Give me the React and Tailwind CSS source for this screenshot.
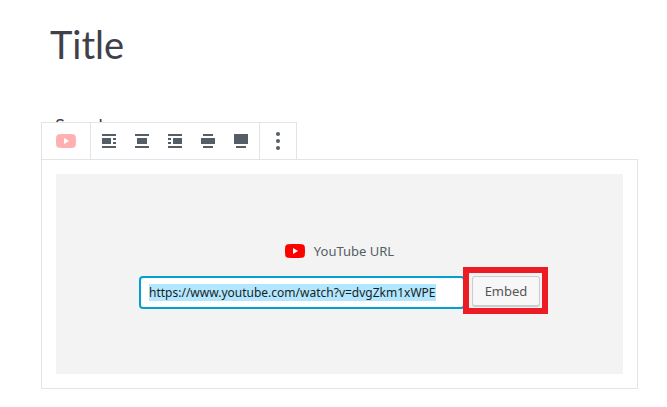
import { useEffect, useRef } from "react";

function YouTubeIcon({ className }) {
  return (
    <svg viewBox="0 0 20 14" className={`h-[14px] w-5 ${className}`} aria-hidden="true">
      <path
        fill="#ff0000"
        d="M3 .3C7 -.1 13 -.1 17 .3c1.600.2 2.400 1 2.700 2.300.4 2.800.4 6 0 8.800-.3 1.300-1.100 2.100-2.700 2.300-4 .4-10 .4-14 0C1.400 13.500.600 12.700.300 11.400c-.4-2.800-.4-6 0-8.800C.600 1.300 1.400.500 3 .300z"
      />
      <path fill="#fff" d="M8 4l5 3-5 3z" />
    </svg>
  );
}

const alignments = [
  { label: "Align left", d: "M3 3h14v2H3zM3 7h9v6H3zM14 7h3v2h-3zM14 11h3v2h-3zM3 15h14v2H3z" },
  { label: "Align center", d: "M3 3h14v2H3zM5 7h10v6H5zM3 15h14v2H3z" },
  { label: "Align right", d: "M3 3h14v2H3zM3 7h3v2H3zM3 11h3v2H3zM8 7h9v6H8zM3 15h14v2H3z" },
  { label: "Wide width", d: "M5 3h10v2H5zM3 7h14v6H3zM5 15h10v2H5z" },
  { label: "Full width", d: "M3 3h14v10H3zM5 15h10v2H5z" },
];

function Toolbar() {
  return (
    <div role="toolbar" aria-label="Block tools" className="relative flex h-[37px] w-fit border border-b-0 border-[#e2e4e7] bg-white text-[#555d66]">
      <button type="button" aria-label="Change block type" disabled className="flex items-center border-r border-[#e2e4e7] px-[14px]">
        <YouTubeIcon className="opacity-30" />
      </button>
      <div className="flex gap-px border-r border-[#e2e4e7] px-[2px]">
        {alignments.map(({ label, d }) => (
          <button key={label} type="button" aria-label={label} className="flex items-center px-[6px]">
            <svg viewBox="0 0 20 20" className="size-5" fill="currentColor" shapeRendering="crispEdges" aria-hidden="true">
              <path d={d} />
            </svg>
          </button>
        ))}
      </div>
      <button type="button" aria-label="More options" className="flex items-center px-2">
        <svg viewBox="0 0 20 20" className="size-5" fill="currentColor" aria-hidden="true">
          <circle cx="10" cy="3" r="2" />
          <circle cx="10" cy="10" r="2" />
          <circle cx="10" cy="17" r="2" />
        </svg>
      </button>
    </div>
  );
}

function EmbedForm() {
  const input = useRef(null);

  useEffect(() => {
    input.current.focus();
    input.current.select();
  }, []);

  return (
    <form className="w-full max-w-[401px]" onSubmit={(event) => event.preventDefault()}>
      <label htmlFor="embed-url" className="mb-[15px] flex items-center justify-center gap-[9px] leading-5 text-[#555d66]">
        <YouTubeIcon className="" />
        YouTube URL
      </label>
      <div className="flex items-start gap-[7px]">
        <input
          ref={input}
          id="embed-url"
          type="url"
          defaultValue="https://www.youtube.com/watch?v=dvgZkm1xWPE"
          className="h-[33px] min-w-0 flex-1 rounded-[4px] border-2 border-[#00a0d2] bg-white px-2 text-[12px] text-[#191e23] outline-none selection:bg-[#b3e7ff] selection:text-[#191e23]"
        />
        <div className="relative">
          <button type="submit" className="h-[31px] w-[68px] rounded-[3px] border border-b-2 border-[#cccccc] bg-[#f7f7f7] pt-px text-[#555555]">
            Embed
          </button>
          <span className="pointer-events-none absolute -top-[9px] -right-2 -left-[9px] h-[47px] border-6 border-[#ed1c24]" />
        </div>
      </div>
    </form>
  );
}

export default function App() {
  return (
    <main className="min-h-screen bg-white pt-[22px] pr-[29px] pb-[18px] pl-[41px] font-['Noto_Sans',sans-serif] text-[13px]">
      <h1 className="pl-[9px] font-['Lato',sans-serif] text-[38px] leading-[44px] text-[#40404a]">Title</h1>
      <p className="mt-[47px] -mb-[15px] pl-[14px] font-['Lato',sans-serif] text-[18px] leading-6 text-[#40404a]">Sample</p>
      <Toolbar />
      <section className="border border-[#e2e4e7] p-[14px]">
        <div className="flex min-h-[200px] items-center justify-center bg-[#f3f3f3] px-4 pt-[2px]">
          <EmbedForm />
        </div>
      </section>
    </main>
  );
}
